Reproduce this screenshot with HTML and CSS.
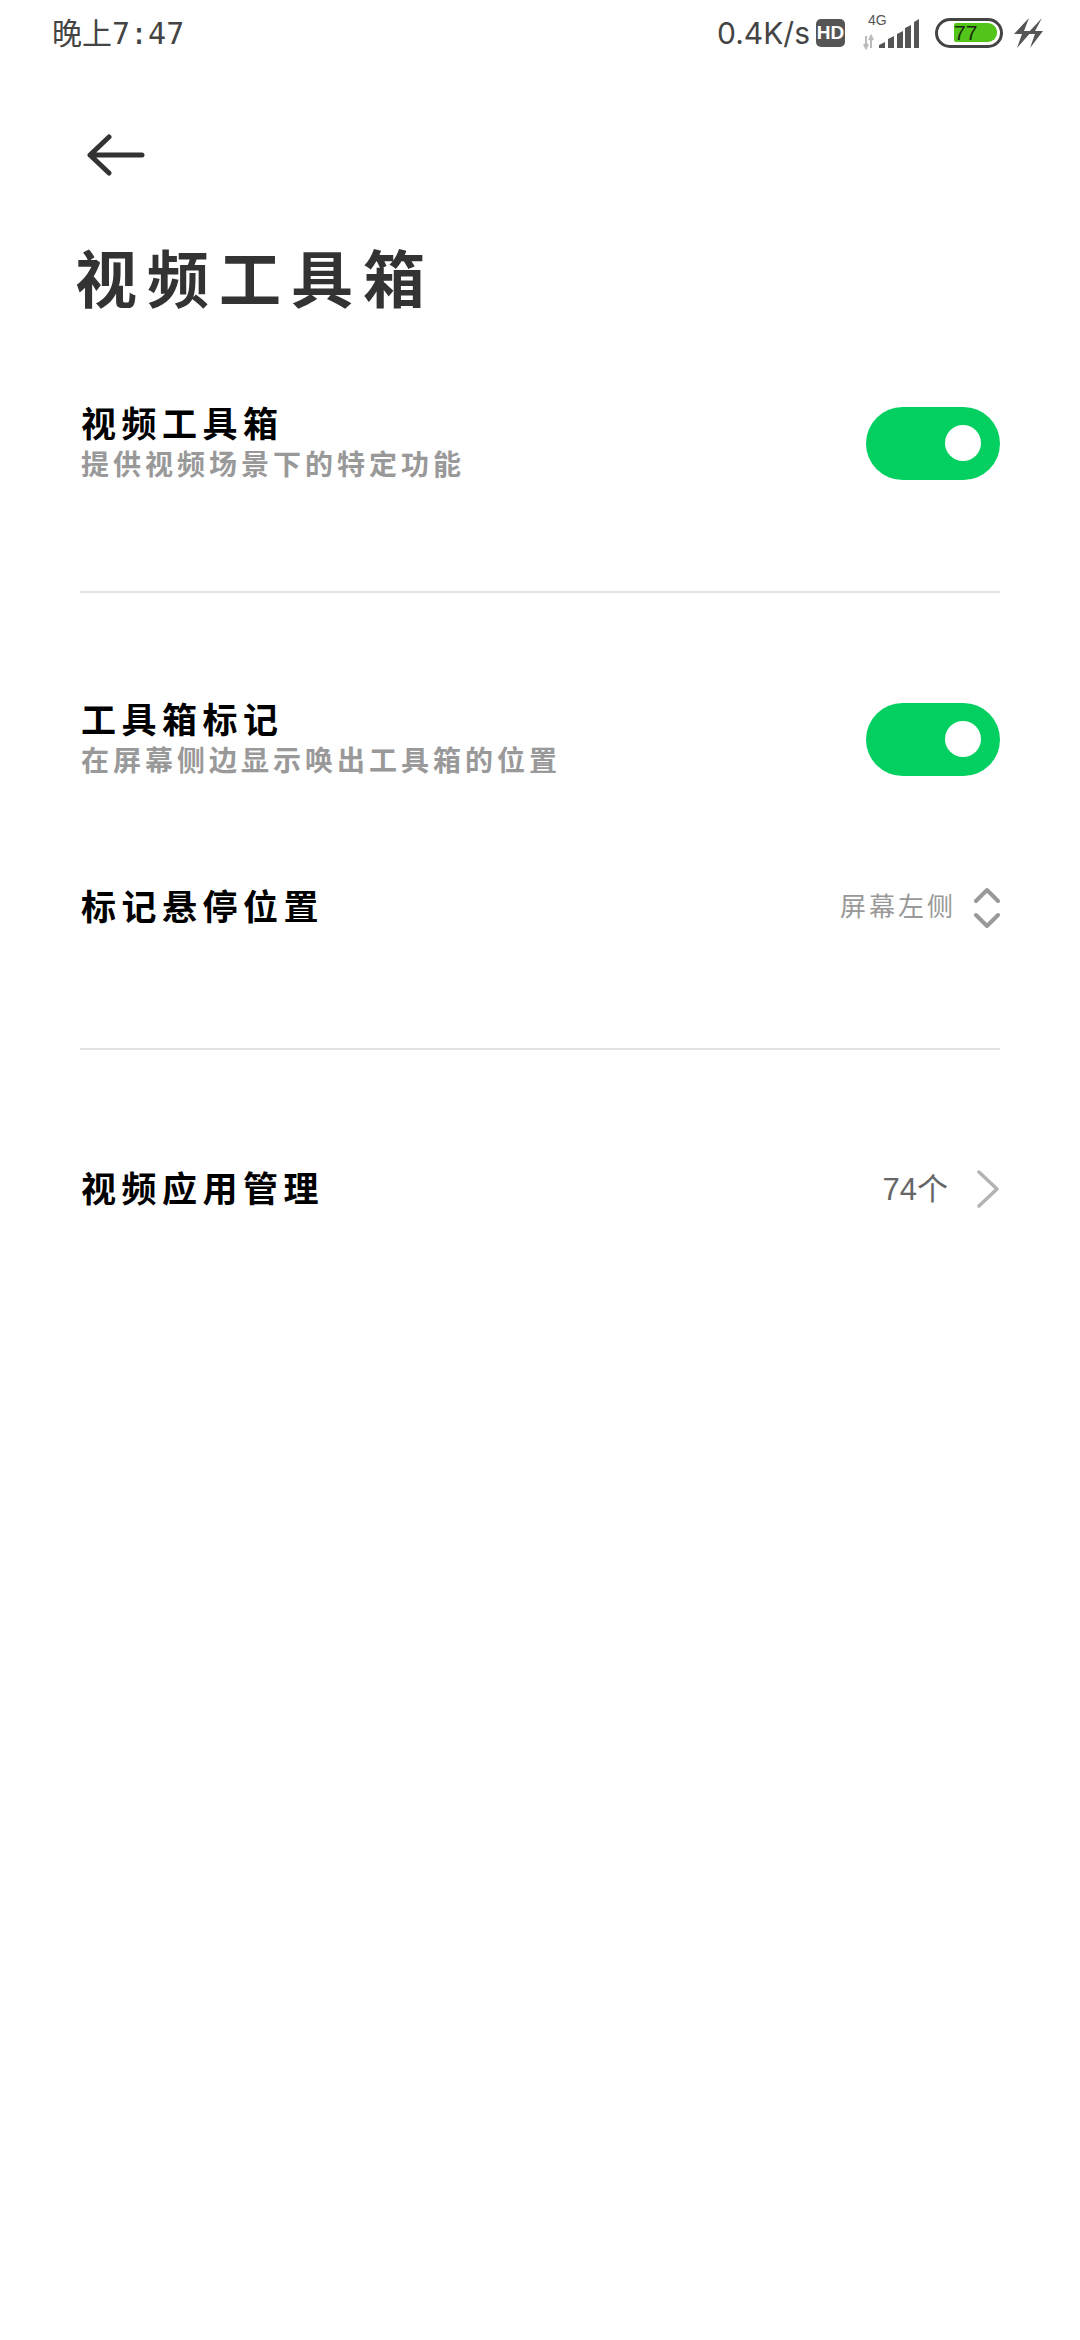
FILE: index.html
```html
<!DOCTYPE html>
<html lang="zh-CN">
<head>
    <meta charset="UTF-8">
    <meta name="viewport" content="width=device-width, initial-scale=1.0">
    <title>视频工具箱</title>
    <link rel="stylesheet" href="styles.css">
</head>
<body>
    <!-- 状态栏 -->
    <header class="status">
        <span class="clock">晚上7:47</span>
        <div class="status-right">
            <span class="speed">0.4K/s</span>
            <span class="hd">HD</span>
            <div class="signal">
                <span class="net">4G</span>
                <svg width="60" height="36" viewBox="0 0 60 36">
                    <path d="M5 22v12M3 30l2 4 2-4M10 34V22M8 26l2-4 2 4" fill="none" stroke="#bbb" stroke-width="2"/>
                    <path d="M18 34v-3l6-3v6zM27 34V25l6-3v12zM36 34V20l6-3v17zM44 34V14l6-3v23zM53 34V8l5-3v29z" fill="#555"/>
                </svg>
            </div>
            <div class="battery">
                <div class="battery-fill">77</div>
            </div>
            <svg class="bolt" width="30" height="30" viewBox="0 0 30 30">
                <path d="M16 0 1 16h8L4 30l15-17h-8zM29 0 14 16h8l-5 14 13-17h-8z" fill="#555"/>
            </svg>
        </div>
    </header>

    <!-- 标题 -->
    <div class="nav">
        <svg width="60" height="42" viewBox="0 0 60 42">
            <path d="M22 3 3 21l19 18M3 21h52" fill="none" stroke="#333" stroke-width="5" stroke-linecap="round" stroke-linejoin="round"/>
        </svg>
    </div>
    <h1 class="title">视频工具箱</h1>

    <main class="content">
        <section class="group group-first">
            <div class="row">
                <div class="row-text">
                    <div class="row-title">视频工具箱</div>
                    <div class="row-sub">提供视频场景下的特定功能</div>
                </div>
                <div class="toggle"><span class="knob"></span></div>
            </div>
        </section>

        <section class="group group-marks">
            <div class="row">
                <div class="row-text">
                    <div class="row-title">工具箱标记</div>
                    <div class="row-sub">在屏幕侧边显示唤出工具箱的位置</div>
                </div>
                <div class="toggle"><span class="knob"></span></div>
            </div>
            <div class="row row-small row-position">
                <div class="row-title">标记悬停位置</div>
                <div class="row-value">
                    <span class="value-text">屏幕左侧</span>
                    <svg class="updown" width="26" height="42" viewBox="0 0 26 42">
                        <path d="M2 14 13 3l11 11M2 28l11 11 11-11" fill="none" stroke="#999" stroke-width="4" stroke-linecap="round" stroke-linejoin="round"/>
                    </svg>
                </div>
            </div>
        </section>

        <section class="group group-apps">
            <div class="row row-small">
                <div class="row-title">视频应用管理</div>
                <div class="row-value">
                    <span class="count">74个</span>
                    <svg class="more" width="24" height="38" viewBox="0 0 24 38">
                        <path d="M3 2l18 17L3 36" fill="none" stroke="#b3b3b3" stroke-width="3.500" stroke-linecap="round" stroke-linejoin="round"/>
                    </svg>
                </div>
            </div>
        </section>
    </main>
</body>
</html>
```

FILE: styles.css
```css
* {
    box-sizing: border-box;
}
body {
    margin: 0;
    height: 2340px;
    background-color: #fff;
    font-family: "Noto Sans CJK SC", "Noto Sans", sans-serif;
    overflow: hidden;
}

/* status bar */
.status {
    height: 66px;
    padding: 0 37px 0 52px;
    display: flex;
    justify-content: space-between;
    align-items: center;
    color: #444;
}
.clock {
    font-family: "DejaVu Sans Mono", "Noto Sans CJK SC", sans-serif;
    font-size: 30px;
    padding-bottom: 5px;
}
.status-right {
    display: flex;
    align-items: center;
}
.speed {
    font-family: Inter, sans-serif;
    font-size: 30px;
    margin-right: 6px;
    padding-bottom: 1px;
}
.hd {
    width: 29px;
    height: 28px;
    border-radius: 5px;
    background-color: #555;
    color: #fff;
    font-family: "Liberation Sans", sans-serif;
    font-weight: 700;
    font-size: 19px;
    line-height: 28px;
    text-align: center;
}
.signal {
    width: 60px;
    height: 36px;
    margin-left: 16px;
    margin-top: -2px;
    position: relative;
}
.net {
    position: absolute;
    top: -2px;
    left: 7px;
    font-family: "Liberation Sans", sans-serif;
    font-size: 14px;
    line-height: 16px;
    color: #555;
}
.battery {
    width: 68px;
    height: 30px;
    margin-left: 14px;
    padding: 2px 0 0 16px;
    border: 3px solid #444;
    border-radius: 15px;
}
.battery-fill {
    width: 43px;
    height: 19px;
    background-color: #52c41a;
    border-radius: 2px 9px 9px 2px;
    color: #1a2a10;
    font-family: "Liberation Sans", sans-serif;
    font-size: 21px;
    line-height: 19px;
}
.bolt {
    margin-left: 10px;
}

/* back arrow and page title */
.nav {
    height: 165px;
    padding: 68px 0 0 87px;
}
.title {
    margin: 0;
    padding-left: 75px;
    height: 90px;
    font-size: 62px;
    font-weight: 700;
    line-height: 90px;
    letter-spacing: 10px;
    color: #333;
}

/* settings list */
.content {
    padding: 0 80px;
}
.group {
    border-bottom: 2px solid #e3e3e3;
}
.group-first {
    padding: 67px 0 93px;
}
.group-marks {
    padding: 91px 0 102px;
}
.group-apps {
    padding-top: 98px;
    border-bottom: none;
}
.row {
    height: 110px;
    display: flex;
    justify-content: space-between;
    align-items: center;
}
.row-small {
    height: 80px;
}
.row-position {
    margin-top: 72px;
}
.row-text {
    display: flex;
    flex-direction: column;
    padding-left: 1px;
    padding-bottom: 3px;
}
.row-small .row-title {
    padding-left: 1px;
    padding-bottom: 3px;
}
.row-title {
    font-size: 35px;
    font-weight: 700;
    line-height: 42px;
    letter-spacing: 5.500px;
    color: #000;
}
.row-sub {
    font-size: 28px;
    line-height: 40px;
    letter-spacing: 4px;
    color: #999;
    font-weight: 700;
}
.toggle {
    width: 134px;
    height: 73px;
    padding-right: 19px;
    border-radius: 37px;
    background-color: #04d061;
    display: flex;
    justify-content: flex-end;
    align-items: center;
}
.knob {
    width: 36px;
    height: 36px;
    border-radius: 50%;
    background-color: #fff;
}
.row-value {
    display: flex;
    align-items: center;
}
.value-text {
    font-size: 26px;
    letter-spacing: 3px;
    color: #999;
    margin-right: 18px;
    padding-bottom: 3px;
}
.updown {
    margin-top: 4px;
}
.count {
    font-family: "Liberation Sans", "Noto Sans CJK SC", sans-serif;
    font-size: 31px;
    color: #666;
    margin-right: 28px;
    padding-bottom: 3px;
}
.more {
    margin-top: 2px;
}
```
